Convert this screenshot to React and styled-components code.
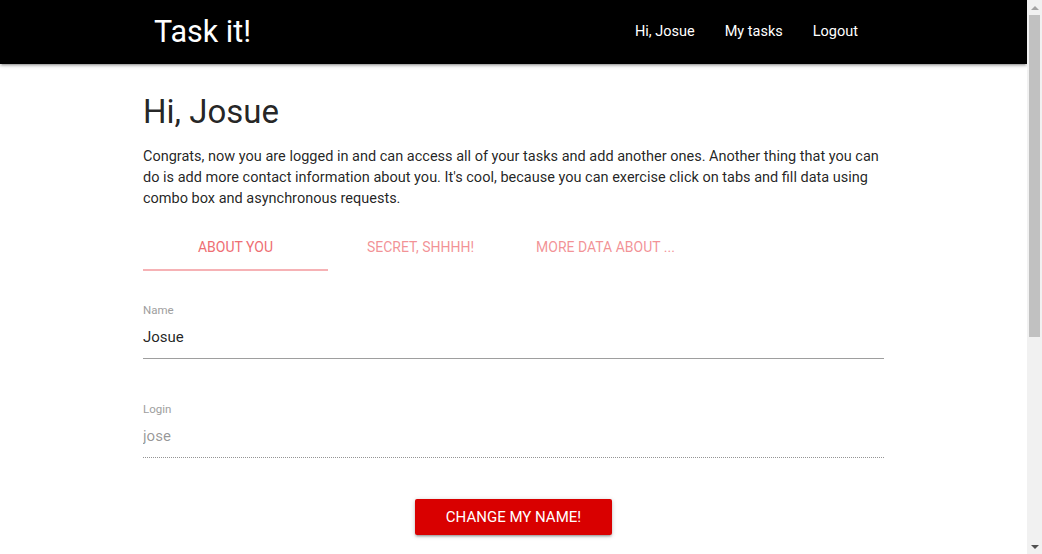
import React, { useState } from 'react'
import styled, { createGlobalStyle } from 'styled-components'

const GlobalStyle = createGlobalStyle`
  html, body {
    margin: 0;
    padding: 0;
    background: #fff;
    font-family: Roboto, "Liberation Sans", sans-serif;
    color: rgba(0, 0, 0, 0.87);
  }
  * { box-sizing: border-box; }
`

const Page = styled.div`
  min-height: 900px;
  margin-right: 15px;
`

// classic scrollbar as seen in the screenshot
const ScrollTrack = styled.div`
  position: fixed;
  top: 0;
  right: 0;
  bottom: 0;
  width: 15px;
  background: #f1f1f1;
  display: flex;
  flex-direction: column;
  align-items: center;
`

const ScrollArrow = styled.div`
  height: 15px;
  width: 15px;
  display: flex;
  align-items: center;
  justify-content: center;

  &::before {
    content: '';
    border-left: 4px solid transparent;
    border-right: 4px solid transparent;
    ${p => (p.$down ? 'border-top: 4px solid #505050;' : 'border-bottom: 4px solid #a3a3a3;')}
  }
`

const ScrollThumb = styled.div`
  width: 11px;
  height: 322px;
  background: #c1c1c1;
`

const ScrollSpace = styled.div`
  flex: 1;
`

const NavBar = styled.nav`
  background: #000;
  height: 64px;
  box-shadow: 0 2px 2px 0 rgba(0,0,0,0.14), 0 3px 1px -2px rgba(0,0,0,0.12), 0 1px 5px 0 rgba(0,0,0,0.2);
`

const NavInner = styled.div`
  width: 741px;
  margin: 0 auto;
  height: 64px;
  display: flex;
  align-items: center;
  justify-content: space-between;
  padding: 0 11px;
`

const Brand = styled.a`
  color: #fff;
  font-size: 30.5px;
  text-decoration: none;
  line-height: 64px;
`

const NavLinks = styled.ul`
  display: flex;
  list-style: none;
  margin: 0;
  padding: 0;
`

const NavLink = styled.a`
  display: block;
  color: #fff;
  font-size: 14.5px;
  padding: 0 15px;
  line-height: 62px;
  text-decoration: none;
`

const Container = styled.main`
  width: 741px;
  margin: 0 auto;
  padding-top: 26px;
`

const Title = styled.h1`
  font-size: 33px;
  font-weight: 400;
  margin: 0 0 12px;
  line-height: 44px;
  color: rgba(0, 0, 0, 0.87);
`

const Intro = styled.p`
  font-size: 14.5px;
  line-height: 21px;
  margin: 0 0 14px;
  padding-right: 4px;
`

const Tabs = styled.ul`
  display: flex;
  list-style: none;
  margin: 0;
  padding: 0;
  height: 48px;
`

const Tab = styled.li`
  width: 185px;
  height: 48px;
  position: relative;
  display: flex;
  align-items: center;
  justify-content: center;
  font-size: 14px;
  text-transform: uppercase;
  color: ${p => (p.$active ? '#ee6e73' : 'rgba(238, 110, 115, 0.75)')};
  white-space: nowrap;
  cursor: pointer;

  &::after {
    content: '';
    position: absolute;
    left: 0;
    right: 0;
    bottom: 0;
    height: 2px;
    background: ${p => (p.$active ? '#f6b2b5' : 'transparent')};
  }
`

const Form = styled.form`
  padding-top: 32px;
  display: flex;
  flex-direction: column;
  gap: 43px;
`

const Field = styled.div`
  display: flex;
  flex-direction: column;
`

const Label = styled.label`
  font-size: 11.5px;
  color: #9e9e9e;
  line-height: 14px;
`

const Input = styled.input`
  border: none;
  border-bottom: 1px ${p => (p.disabled ? 'dotted rgba(0,0,0,0.42)' : 'solid #9e9e9e')};
  background: transparent;
  font-family: inherit;
  font-size: 15px;
  height: 42px;
  padding: 0 0 2px;
  margin: 0;
  color: ${p => (p.disabled ? 'rgba(0,0,0,0.42)' : 'rgba(0,0,0,0.87)')};
  outline: none;
`

const Actions = styled.div`
  display: flex;
  justify-content: center;
  margin-top: -2px;
`

const Button = styled.button`
  background: #d90000;
  color: #fff;
  border: none;
  border-radius: 2px;
  height: 36px;
  width: 197px;
  font-family: inherit;
  font-size: 15px;
  text-transform: uppercase;
  box-shadow: 0 2px 2px 0 rgba(0,0,0,0.14), 0 3px 1px -2px rgba(0,0,0,0.12), 0 1px 5px 0 rgba(0,0,0,0.2);
  cursor: pointer;
`

const tabs = ['About you', 'Secret, shhhh!', 'More data about ...', '']

export default function App() {
  const [active, setActive] = useState(0)
  return (
    <Page>
      <GlobalStyle />
      <NavBar>
        <NavInner>
          <Brand href="#">Task it!</Brand>
          <NavLinks>
            <li><NavLink href="#">Hi, Josue</NavLink></li>
            <li><NavLink href="#">My tasks</NavLink></li>
            <li><NavLink href="#">Logout</NavLink></li>
          </NavLinks>
        </NavInner>
      </NavBar>
      <Container>
        <Title>Hi, Josue</Title>
        <Intro>
          Congrats, now you are logged in and can access all of your tasks and add another ones. Another thing that you can do is add more contact information about you. It's cool, because you can exercise click on tabs and fill data using combo box and asynchronous requests.
        </Intro>
        <Tabs>
          {tabs.map((t, i) => (
            <Tab key={i} $active={i === active} onClick={() => t && setActive(i)}>{t}</Tab>
          ))}
        </Tabs>
        <Form onSubmit={e => e.preventDefault()}>
          <Field>
            <Label>Name</Label>
            <Input defaultValue="Josue" />
          </Field>
          <Field>
            <Label>Login</Label>
            <Input defaultValue="jose" disabled />
          </Field>
          <Actions>
            <Button type="submit">Change my name!</Button>
          </Actions>
        </Form>
      </Container>
      <ScrollTrack>
        <ScrollArrow />
        <ScrollThumb />
        <ScrollSpace />
        <ScrollArrow $down />
      </ScrollTrack>
    </Page>
  )
}
